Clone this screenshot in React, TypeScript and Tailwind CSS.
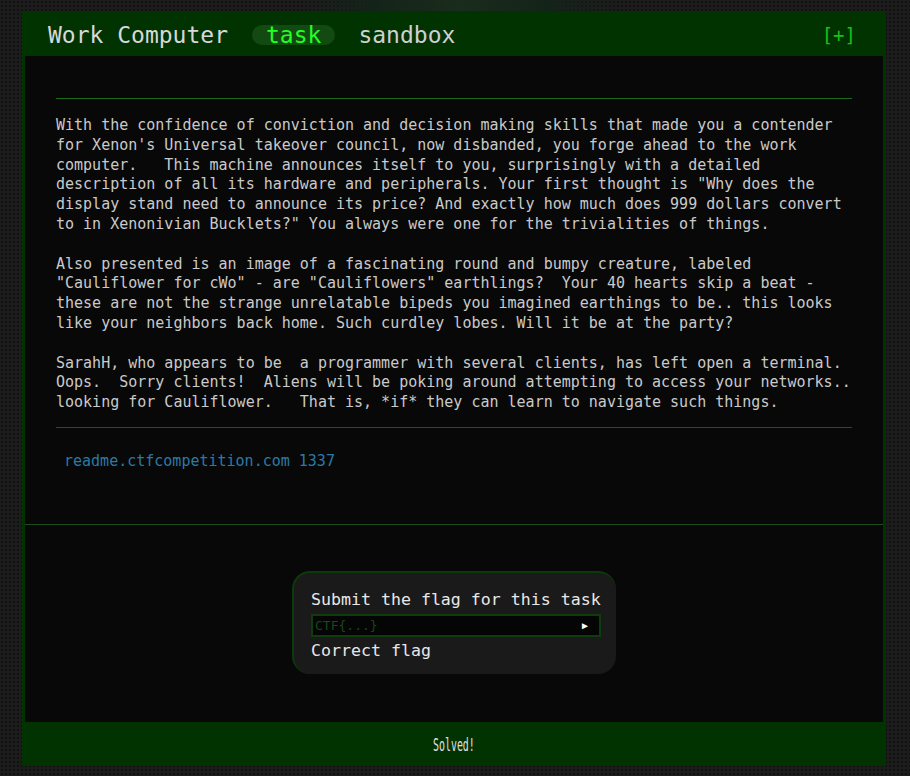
import React from "react";

const mono = "font-['DejaVu_Sans_Mono','Liberation_Mono',monospace]";

const paragraphs = [
  [
    "With the confidence of conviction and decision making skills that made you a contender",
    "for Xenon's Universal takeover council, now disbanded, you forge ahead to the work",
    "computer.   This machine announces itself to you, surprisingly with a detailed",
    "description of all its hardware and peripherals. Your first thought is \"Why does the",
    "display stand need to announce its price? And exactly how much does 999 dollars convert",
    "to in Xenonivian Bucklets?\" You always were one for the trivialities of things.",
  ],
  [
    "Also presented is an image of a fascinating round and bumpy creature, labeled",
    "\"Cauliflower for cWo\" - are \"Cauliflowers\" earthlings?  Your 40 hearts skip a beat -",
    "these are not the strange unrelatable bipeds you imagined earthings to be.. this looks",
    "like your neighbors back home. Such curdley lobes. Will it be at the party?",
  ],
  [
    "SarahH, who appears to be  a programmer with several clients, has left open a terminal.",
    "Oops.  Sorry clients!  Aliens will be poking around attempting to access your networks..",
    "looking for Cauliflower.   That is, *if* they can learn to navigate such things.",
  ],
];

function Header() {
  return (
    <div className={`h-[45px] flex items-center pl-[26px] pr-[30px] pt-[3px] ${mono}`}>
      <span className="text-[23px] text-[#d8d8d8]">Work Computer</span>
      <span className="ml-[24px] h-[20px] px-[14px] rounded-full bg-[#124a12] flex items-center text-[23px] text-[#22ff22]">
        task
      </span>
      <span className="ml-[23px] text-[23px] text-[#d0d0d0]">sandbox</span>
      <span className="ml-auto text-[19px] text-[#16c016]">[+]</span>
    </div>
  );
}

function FlagBox() {
  return (
    <div className="mx-auto w-[324px] h-[103px] rounded-[18px] bg-[#1a1a1a] border-t-2 border-l-2 border-t-[#0b3a0b] border-l-[#0b3a0b] pl-[17px] pt-[17px]">
      <div className={`${mono} text-[16.6px] leading-[20px] text-[#e8e8e8] whitespace-pre`}>
        Submit the flag for this task
      </div>
      <div className="mt-[4px] w-[290px] h-[23px] border-2 border-[#0d3d0d] bg-[#050505] flex items-center px-[2px]">
        <span className={`${mono} text-[13px] text-[#174a17]`}>CTF{"{...}"}</span>
        <span className="ml-auto mr-[7px] text-[10px] text-white">►</span>
      </div>
      <div className={`${mono} mt-[4px] text-[16.6px] leading-[20px] text-[#e8e8e8]`}>Correct flag</div>
    </div>
  );
}

export default function App() {
  return (
    <div className="min-h-screen w-full bg-[#1c1c1c] bg-[radial-gradient(#111111_1px,transparent_1.3px)] bg-[size:4px_4px] pt-[11px] pb-[10px] relative">
      <div className="absolute left-[300px] top-0 w-[320px] h-[11px] bg-[linear-gradient(90deg,transparent,#14241a,#1a2c1c,#14241a,transparent)]" />
      <div className="relative ml-[22px] w-[864px] flex flex-col bg-[#003300]">
        <Header />
        <div className="mx-[3px] h-[666px] bg-[#080808] flex flex-col">
          <div className="px-[31px] pt-[42px]">
            <div className="h-px bg-[#1c6a1c]" />
            <div className={`${mono} mt-[17px] text-[15px] leading-[19.8px] text-[#cacaca] whitespace-pre flex flex-col gap-[19.8px]`}>
              {paragraphs.map((lines, i) => (
                <p key={i}>{lines.join("\n")}</p>
              ))}
            </div>
            <div className="mt-[14px] h-px bg-[#3a3f3a]" />
            <div className={`${mono} mt-[23px] ml-[8px] text-[15px] leading-[20px] text-[#2b7aa6]`}>
              readme.ctfcompetition.com 1337
            </div>
          </div>
          <div className="mt-[53px] h-px bg-[#1d4f1d]" />
          <div className="mt-[46px]">
            <FlagBox />
          </div>
        </div>
        <div className="h-[44px] flex items-center justify-center">
          <span className={`${mono} inline-block text-[18px] text-[#e0e0e0] scale-x-[0.55]`}>Solved!</span>
        </div>
      </div>
    </div>
  );
}
